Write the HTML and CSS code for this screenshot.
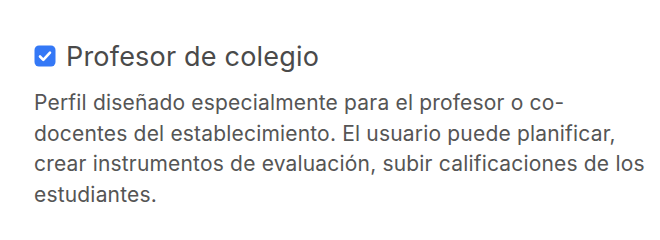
FILE: index.html
```html
<!DOCTYPE html>
<html lang="es">
<head>
<meta charset="utf-8">
<link rel="stylesheet" href="styles.css">
</head>
<body>
<div class="option">
  <label class="option-head">
    <span class="check">
      <svg viewBox="0 0 22 22" width="22" height="22"><rect x="0.5" y="0.5" width="21" height="21" rx="4.5" fill="#3478f6"/><path d="M6 11.5l3.3 3.4L16 7.6" fill="none" stroke="#fff" stroke-width="2.6" stroke-linecap="round" stroke-linejoin="round"/></svg>
    </span>
    <span class="title">Profesor de colegio</span>
  </label>
  <p class="desc">Perfil diseñado especialmente para el profesor o co-<br>docentes del establecimiento. El usuario puede planificar,<br>crear instrumentos de evaluación, subir calificaciones de los<br>estudiantes.</p>
</div>
</body>
</html>
```

FILE: styles.css
```css
html, body {
  margin: 0;
  background: #fff;
}
body {
  font-family: Inter, "Noto Sans", sans-serif;
}
.option {
  padding: 41px 0 0 34px;
}
.option-head {
  display: flex;
  align-items: center;
  gap: 10px;
  height: 30px;
}
.check {
  display: flex;
  width: 22px;
  height: 22px;
}
.title {
  font-size: 27px;
  letter-spacing: 0.2px;
  color: #4a4a4a;
  font-weight: 400;
}
.desc {
  margin: 17px 0 0;
  font-size: 21px;
  letter-spacing: 0.18px;
  line-height: 30.5px;
  color: #555;
  white-space: nowrap;
}
```
